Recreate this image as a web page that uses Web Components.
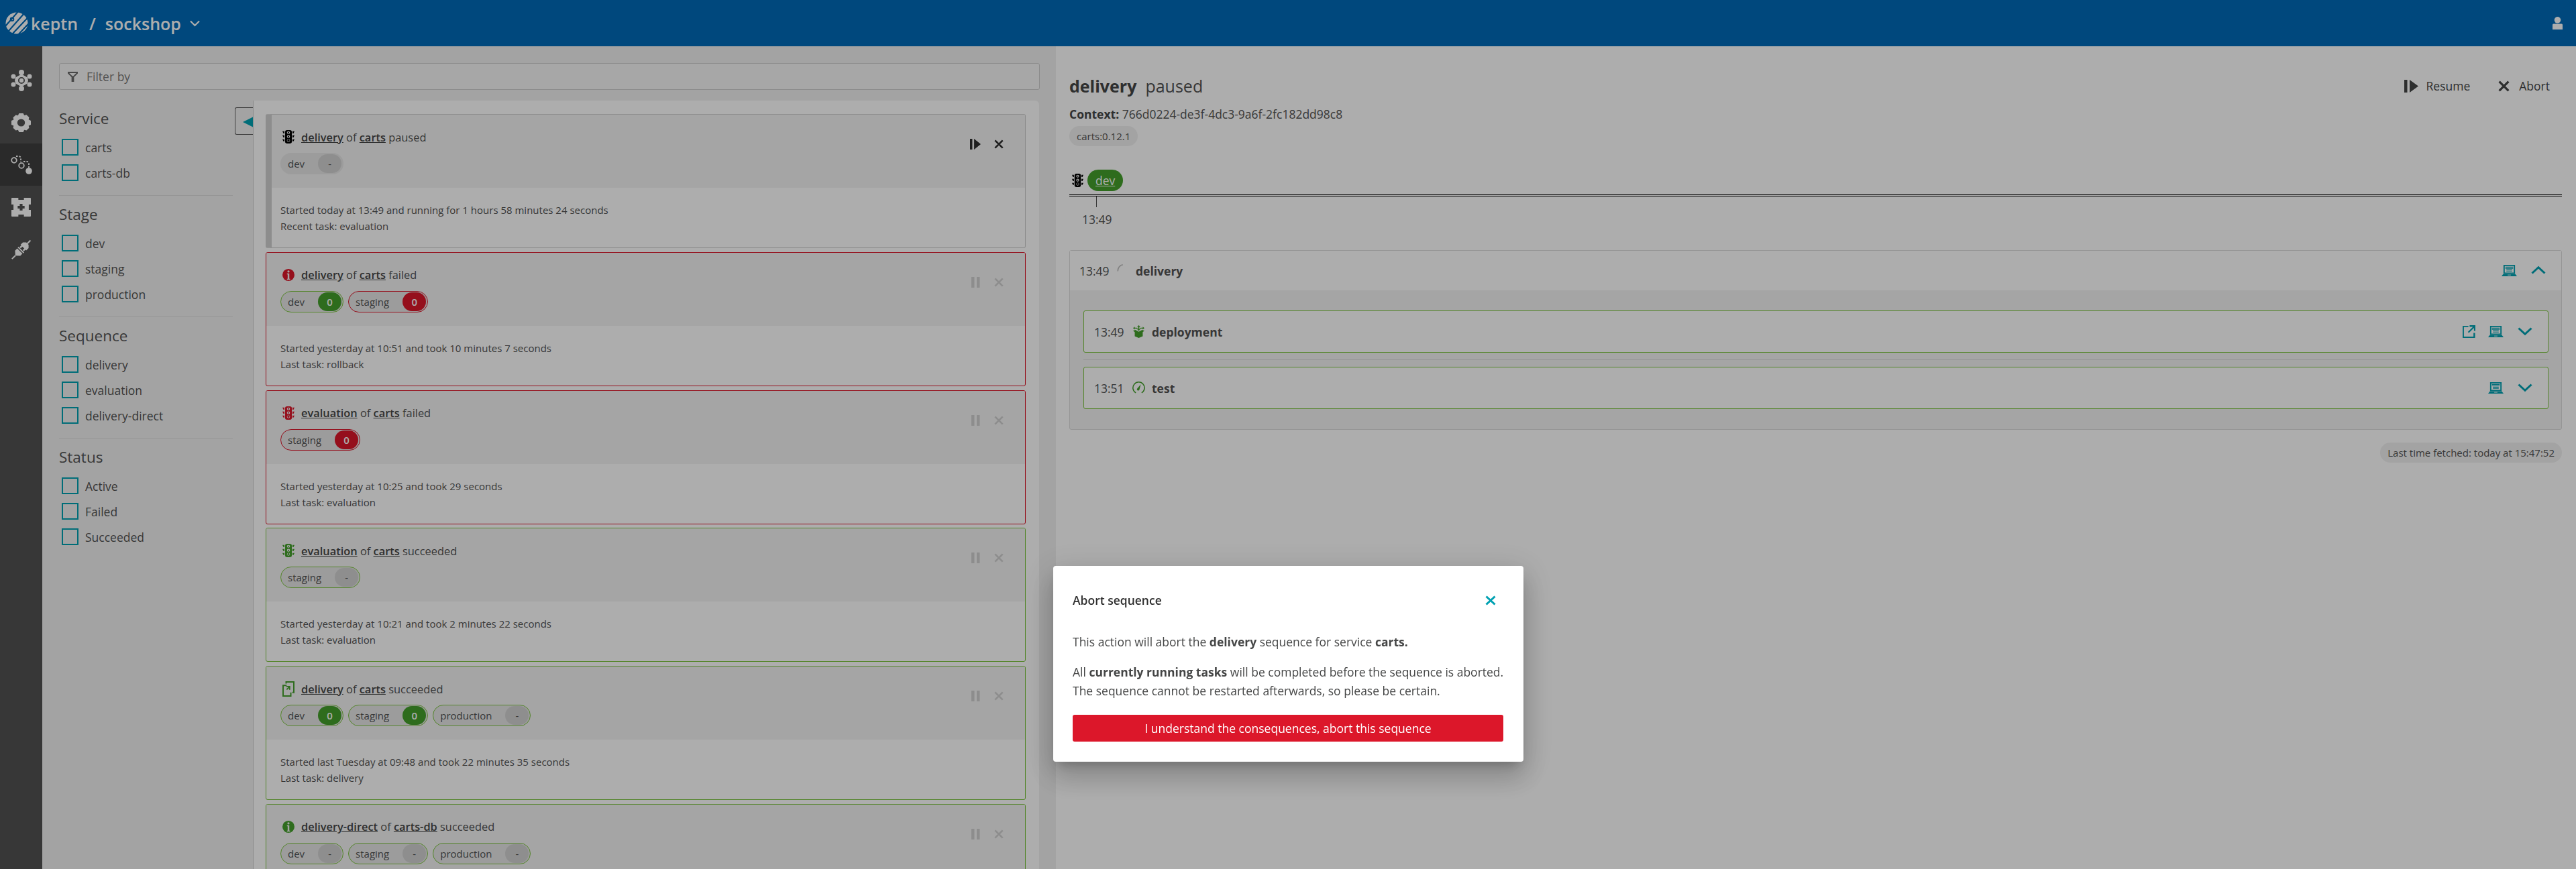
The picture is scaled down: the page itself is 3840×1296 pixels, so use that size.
<!DOCTYPE html>
<html><head><meta charset="utf-8"><title>keptn</title>
<style>
html,body{margin:0;padding:0;width:3840px;height:1296px;overflow:hidden;background:#f2f2f2;font-family:"Open Sans",sans-serif;color:#525252;font-size:17.500px}
</style></head><body>
<k-app>
  <k-header slot="header"></k-header>
  <k-sidenav slot="nav"></k-sidenav>
  <k-filterbar slot="filter"></k-filterbar>
  <k-filters slot="filters">
    <k-section title="Service"><k-check>carts</k-check><k-check>carts-db</k-check></k-section>
    <k-section title="Stage" divided><k-check>dev</k-check><k-check>staging</k-check><k-check>production</k-check></k-section>
    <k-section title="Sequence" divided><k-check>delivery</k-check><k-check>evaluation</k-check><k-check>delivery-direct</k-check></k-section>
    <k-section title="Status" divided><k-check>Active</k-check><k-check>Failed</k-check><k-check>Succeeded</k-check></k-section>
  </k-filters>
  <k-list slot="list">
    <k-card status="paused" icon="light" seq="delivery" svc="carts" state="paused">
      <k-chip slot="chips" tone="none" badge="none">dev</k-chip>
      Started today at 13:49 and running for 1 hours 58 minutes 24 seconds<br>Recent task: evaluation
    </k-card>
    <k-card status="failed" icon="info" seq="delivery" svc="carts" state="failed">
      <k-chip slot="chips" tone="ok" badge="ok">dev</k-chip>
      <k-chip slot="chips" tone="bad" badge="bad">staging</k-chip>
      Started yesterday at 10:51 and took 10 minutes 7 seconds<br>Last task: rollback
    </k-card>
    <k-card status="failed" icon="light" seq="evaluation" svc="carts" state="failed">
      <k-chip slot="chips" tone="bad" badge="bad">staging</k-chip>
      Started yesterday at 10:25 and took 29 seconds<br>Last task: evaluation
    </k-card>
    <k-card status="ok" icon="light" seq="evaluation" svc="carts" state="succeeded">
      <k-chip slot="chips" tone="ok" badge="none">staging</k-chip>
      Started yesterday at 10:21 and took 2 minutes 22 seconds<br>Last task: evaluation
    </k-card>
    <k-card status="ok" icon="extbox" seq="delivery" svc="carts" state="succeeded">
      <k-chip slot="chips" tone="ok" badge="ok">dev</k-chip>
      <k-chip slot="chips" tone="ok" badge="ok">staging</k-chip>
      <k-chip slot="chips" tone="ok" badge="none">production</k-chip>
      Started last Tuesday at 09:48 and took 22 minutes 35 seconds<br>Last task: delivery
    </k-card>
    <k-card status="ok" icon="info" seq="delivery-direct" svc="carts-db" state="succeeded">
      <k-chip slot="chips" tone="ok" badge="none">dev</k-chip>
      <k-chip slot="chips" tone="ok" badge="none">staging</k-chip>
      <k-chip slot="chips" tone="ok" badge="none">production</k-chip>
    </k-card>
  </k-list>
  <k-detail slot="detail"></k-detail>
</k-app>
<k-modal></k-modal>
<script>
const ICONS={
 light:['0 0 18 22','<path fill-rule="evenodd" d="M7 0h4a3 3 0 0 1 3 3v16a3 3 0 0 1-3 3H7a3 3 0 0 1-3-3V3a3 3 0 0 1 3-3zM9 1.800a2.300 2.300 0 1 0 0 4.600a2.300 2.300 0 0 0 0-4.600zM9 8.300a2.300 2.300 0 1 0 0 4.600a2.300 2.300 0 0 0 0-4.600zM9 14.800a2.300 2.300 0 1 0 0 4.600a2.300 2.300 0 0 0 0-4.600z"/><circle cx="9" cy="4.100" r="1.100"/><circle cx="9" cy="10.600" r="1.100"/><circle cx="9" cy="17.100" r="1.600"/><path d="M0 2h3v3.500H1.500zM0 8.500h3V12H1.500zM0 15h3v3.500H1.500zM18 2h-3v3.500h1.500zM18 8.500h-3V12h1.500zM18 15h-3v3.500h1.500z"/>'],
 info:['0 0 20 22','<path fill-rule="evenodd" d="M10 1a10 10 0 1 1 0 20a10 10 0 0 1 0-20zM10 3.500a1.800 1.800 0 1 0 0 3.600a1.800 1.800 0 0 0 0-3.600zM7.500 8.500v1.700h1.200v7H7.500V19h5.200v-1.800h-1.300V8.500z"/>'],
 extbox:['0 0 20 26','<path d="M0 6h7v2.200H2.200v15.600h10.600V19H15v7H0z"/><path d="M5 0h15v20h-3.500v-2.200h1.300V2.200H7.200V4H5z"/><path d="M6.500 10h6.500v6.500h-2v-3l-3.300 3.300-1.500-1.500L10 11.900H6.500z" transform="translate(0 -2)"/>'],
 deploy:['0 0 20 22','<path d="M10 0l3 3h-2v6.500h-2V3H7zM0 5l3-2.400v1.700h3.500L9 7v1.500L6 5.700H3v1.700zM20 5l-3-2.400v1.700h-3.500L11 7v1.500l3-2.800h3v1.700z"/><path d="M0 9.500L4 8l6 3.300L16 8l4 1.500-3 2.500v7l-7 3-7-3v-7z"/>'],
 gauge:['0 0 22 22','<path fill="none" stroke="currentColor" stroke-width="1.800" d="M6 19.600A10 10 0 1 1 16 19.600"/><path d="M14.500 5l-2.300 8.800a2.200 2.200 0 1 1-3.600-2z"/>'],
 ext:['0 0 20 20','<path d="M0 1h9v2H2v15h15v-6h2.500v8H0z" /><path d="M11 0h9v9h-2.200V4.200l-8 8-1.600-1.600 8-8H11z"/>'],
 laptop:['0 0 24 18','<path fill-rule="evenodd" d="M3 0h18v14H3zM5 1.800v10.400h14V1.800z"/><path d="M2.800 14.300h18.400L24 18H0z"/><path d="M6 3h12v1.200H6zM6 5h12v1.200H6zM7.500 7.200h9v1.200h-9zM7.500 9.200h9v1.200h-9z"/><rect x="9.500" y="15.500" width="5" height="1" fill="#f7f7f7"/>'],
 up:['0 0 22 14','<path fill="none" stroke="currentColor" stroke-width="3" d="M1.500 12.500L11 3l9.500 9.500"/>'],
 down:['0 0 22 14','<path fill="none" stroke="currentColor" stroke-width="3" d="M1.500 1.500L11 11l9.500-9.500"/>'],
 resume:['0 0 21 19','<path d="M0 0h4.500v19H0zM8 0l13 9.500L8 19z"/>'],
 pause:['0 0 13 16','<path d="M0 0h4.500v16H0zM8 0h4.500v16H8z"/>'],
 x:['0 0 16 16','<path fill="none" stroke="currentColor" stroke-width="3" d="M1.500 1.500l13 13M14.500 1.500l-13 13"/>'],
 filter:['0 0 16 15','<path d="M0 0h16v2.500L10 8v7H6V8L0 2.500zM2.500 2l4.800 4.500h1.400L13.500 2z" fill-rule="evenodd"/>'],
 user:['0 0 15 19','<circle cx="7.500" cy="4.800" r="4.800"/><path d="M1.500 10.500h12a1.500 1.500 0 0 1 1.500 1.500v7H0v-7a1.500 1.500 0 0 1 1.500-1.500z"/>'],
 chev:['0 0 15 10','<path fill="none" stroke="currentColor" stroke-width="2.200" d="M1 1.500l6.500 6.500 6.500-6.500"/>'],
 spin:['0 0 12 12','<path fill="none" stroke="currentColor" stroke-width="2" d="M1.500 11.500A10 10 0 0 1 10.500 1"/>'],
 flower:['0 0 32 32','<circle cx="16" cy="4" r="4"/><circle cx="16" cy="28" r="4"/><circle cx="4" cy="10" r="3.500"/><circle cx="28" cy="10" r="3.500"/><circle cx="4" cy="22" r="3.500"/><circle cx="28" cy="22" r="3.500"/><path fill-rule="evenodd" d="M16 6.500l8 4.500 1 1 1 4-1 4-1 1-8 4.500-8-4.500-1-1-1-4 1-4 1-1zM16 11a5 5 0 1 0 0 10a5 5 0 0 0 0-10z"/><circle cx="16" cy="16" r="3.200"/>'],
 gear:['0 0 28 28','<path fill-rule="evenodd" d="M11 0h6l1.500 3 3.200-.7 3.800 3.800-.7 3.200L28 11v6l-3.200 1.500.7 3.200-3.800 3.800-3.200-.7L17 28h-6l-1.500-3.200-3.200.7-3.800-3.800.7-3.200L0 17v-6l3.200-1.500-.7-3.200 3.800-3.800 3.200.7zM14 8.500a5.500 5.500 0 1 0 0 11a5.500 5.500 0 0 0 0-11z"/>'],
 seq:['0 0 32 28','<g fill="none" stroke="currentColor" stroke-width="1.800"><circle cx="5" cy="7" r="3.800"/><circle cx="16" cy="15" r="3.800"/><path stroke-dasharray="2.500 2" d="M8 1h4a3 3 0 0 1 3 3v6M19 9h5a3 3 0 0 1 3 3v8"/></g><circle cx="27" cy="23" r="4.800"/>'],
 puzzle:['0 0 28 28','<path fill-rule="evenodd" d="M1 0h9v3h8V0h9a1 1 0 0 1 1 1v9h-3v8h3v9a1 1 0 0 1-1 1h-9v-3h-8v3H1a1 1 0 0 1-1-1v-9h3v-8H0V1a1 1 0 0 1 1-1zM12 9v3H9v4h3v3h4v-3h3v-4h-3V9z"/>'],
 plug:['0 0 32 32','<g transform="rotate(-45 16 16)"><path d="M-4 15h7v2h-7zM3 16L8 10.500h4.500v11H8zM14 10h1.800v12H14zM20 10h5l3.500 3.500v5L25 22h-5zM16.500 11.500h3.500v2.500h-3.500zM16.500 18h3.500v2.500h-3.500zM28 15h7v2h-7z"/></g>'],
 logo:['0 0 34 34','<circle cx="17" cy="17" r="16.500" fill="#fff"/><g stroke="#006bb8" stroke-width="2.200"><path d="M-2 24L20-2M4 30L28 2M10 34L34 8M18 36L38 14"/></g><path d="M2 10L8 3l6 0L4 15z" fill="#fff"/><circle cx="10" cy="11" r="2.400" fill="none" stroke="#006bb8" stroke-width="1.800"/>']
};
function def(name,css,html){
  customElements.define(name,class extends HTMLElement{
    connectedCallback(){
      if(this.shadowRoot)return;
      const r=this.attachShadow({mode:'open'});
      const h=typeof html==='function'?html(this):html;
      r.innerHTML='<style>'+css+'</style>'+h;
    }
  });
}
def('k-icon',':host{display:inline-flex;flex:none;line-height:0}svg{display:block;width:100%;height:100%;fill:currentColor}',
  el=>{const i=ICONS[el.getAttribute('name')];return '<svg xmlns="http://www.w3.org/2000/svg" viewBox="'+i[0]+'" preserveAspectRatio="none">'+i[1]+'</svg>';});
def('k-app',`
 :host{display:grid;grid-template-columns:63px 1511px 1fr;grid-template-rows:69px 1227px;width:3840px;height:1296px}
 .h{grid-column:1/4}
 .l{background:#f1f1f1;display:flex;flex-direction:column;padding:25px 24px 0 25px;box-sizing:border-box;overflow:hidden;width:1511px}
 .row{display:flex;margin-top:16px;flex:1;min-height:0}
 .d{min-width:0;background:#fff;overflow:hidden}
`,`<div class="h"><slot name="header"></slot></div><slot name="nav"></slot>
 <div class="l"><slot name="filter"></slot><div class="row"><slot name="filters"></slot><slot name="list"></slot></div></div>
 <div class="d"><slot name="detail"></slot></div>`);
def('k-header',`
 :host{display:flex;align-items:center;height:69px;background:#006bb8;color:#fff;padding:0 20px 0 8px;box-sizing:border-box}
 .logo{width:34px;height:33px;margin-right:4px}
 .b{font-size:25px;font-weight:600;line-height:32px}
 .s{margin:0 14px 0 17px;font-size:25px;font-weight:600}
 .c{width:15px;height:10px;margin-left:13px;}
 .sp{flex:1}.u{width:15px;height:19px}
`,`<k-icon class="logo" name="logo"></k-icon><span class="b">keptn</span><span class="s">/</span><span class="b">sockshop</span><k-icon class="c" name="chev"></k-icon><span class="sp"></span><k-icon class="u" name="user"></k-icon>`);
def('k-sidenav',`
 :host{display:flex;flex-direction:column;background:#525252;padding-top:19px;color:#fff;width:63px}
 div{height:63px;display:flex;align-items:center;justify-content:center}
 .a{background:#3e3e3e}
`,`<div><k-icon name="flower" style="width:32px;height:32px"></k-icon></div>
 <div><k-icon name="gear" style="width:29px;height:28px"></k-icon></div>
 <div class="a"><k-icon name="seq" style="width:32px;height:28px"></k-icon></div>
 <div><k-icon name="puzzle" style="width:29px;height:28px"></k-icon></div>
 <div><k-icon name="plug" style="width:32px;height:32px"></k-icon></div>`);
def('k-filterbar',`
 :host{display:flex;align-items:center;height:40px;box-sizing:border-box;width:1462px;border:1px solid #cfcfcf;border-radius:3px;background:#f7f7f7;padding-left:12px;color:#7a7a7a;font-size:17.500px}
 k-icon{width:15px;height:15px;margin-right:13px;color:#6a6a6a}
`,`<k-icon name="filter"></k-icon><span>Filter by</span>`);
def('k-filters',`
 :host{display:block;width:289px;flex:none;position:relative;padding-top:13px;box-sizing:border-box}
 .t{position:absolute;left:262px;top:10px;width:27px;height:41px;box-sizing:border-box;border:1px solid #5a5a5a;border-right:0;border-radius:3px 0 0 3px;overflow:hidden}
 .t i{position:absolute;left:11px;top:13px;border-style:solid;border-width:8px 16px 8px 0;border-color:transparent #00a1b2 transparent transparent}
`,`<slot></slot><div class="t"><i></i></div>`);
def('k-section',`
 :host{display:block;width:259px;padding-bottom:21px}
 :host([divided]){border-top:1px solid #dcdcdc;padding-top:14px}
 h3{margin:0 0 16px;font-size:22.500px;line-height:28px;font-weight:400;color:#525252}
 .c{display:flex;flex-direction:column;gap:13px;padding-left:4px}
`,el=>`<h3>${el.getAttribute('title')}</h3><div class="c"><slot></slot></div>`);
def('k-check',`
 :host{display:flex;align-items:center;height:25px;font-size:17.500px;color:#525252}
 i{display:block;width:25px;height:25px;box-sizing:border-box;border:2px solid #00a1b2;margin-right:10px}
`,`<i></i><slot></slot>`);
def('k-list',`
 :host{display:flex;flex-direction:column;gap:5.800px;width:1172px;flex:none;box-sizing:border-box;background:#fff;border-left:1px solid #cfcfcf;padding:20px 20px 0 18px;border-radius:0 6px 0 0;height:1200px;overflow:hidden}
`,`<slot></slot>`);
def('k-card',`
 :host{display:block;height:200px;flex:none;box-sizing:border-box;border:1px solid #cfcfcf;border-radius:3px;overflow:hidden;color:#525252;font-size:15px}
 :host([status=paused]){border-left:9px solid #d0d0d0}
 :host([status=failed]){border-color:#dc172a}
 :host([status=ok]){border-color:#7dc540}
 .head{height:109px;background:#f3f3f3;box-sizing:border-box;padding:21px 32px 0 21px;display:flex}
 :host([status=paused]) .head{padding-left:13px}
 .l{flex:1}
 .title{display:flex;align-items:center;height:24px;font-size:16.400px;padding-left:3px}
 .title k-icon{width:18px;height:20px;margin-right:10px}
 .title k-icon[name=extbox]{height:23px}
 :host([status=failed]) .title k-icon{color:#dc172a}
 :host([status=ok]) .title k-icon{color:#44a02c}
 :host([status=paused]) .title k-icon{color:#000}
 b{font-weight:600;color:#454646;text-decoration:underline}
 .chips{display:flex;gap:7px;margin-top:12px}
 .acts{display:flex;align-items:center;gap:20px;height:16px;margin-top:15px;color:#d0d0d0}
 :host([status=paused]) .acts{color:#2f2f2f}
 .acts k-icon{width:16px;height:16px}
 .acts .p{width:13px;margin:0 1px 0 2px}
 .acts .xx{width:14px;height:14px}
 .body{padding:21px 21px 0;line-height:24px}
 :host([status=paused]) .body{padding-left:13px}
`,el=>{const a=n=>el.getAttribute(n);const p=a('status')==='paused';
 return `<div class="head"><div class="l"><div class="title"><k-icon name="${a('icon')}"></k-icon><span><b>${a('seq')}</b> of <b>${a('svc')}</b> ${a('state')}</span></div><div class="chips"><slot name="chips"></slot></div></div>
 <div class="acts"><k-icon class="${p?'':'p'}" name="${p?'resume':'pause'}"></k-icon><k-icon class="xx" name="x"></k-icon></div></div><div class="body"><slot></slot></div>`;});
def('k-chip',`
 :host{display:inline-flex;align-items:center;height:32px;box-sizing:border-box;border:1px solid transparent;border-radius:16px;background:#e6e6e6;padding:0 2px 0 10px;font-size:15px;color:#525252}
 :host([tone=ok]){border-color:#7dc540}
 :host([tone=bad]){border-color:#dc172a}
 .t{margin-right:20px}
 .b{width:35px;height:28px;border-radius:14px;display:flex;align-items:center;justify-content:center;background:#d2d2d2;font-weight:400}
 :host([badge=ok]) .b{background:#44a02c;color:#fff;font-weight:600}
 :host([badge=bad]) .b{background:#dc172a;color:#fff;font-weight:600}
`,el=>{const b=el.getAttribute('badge');return `<span class="t"><slot></slot></span><span class="b">${b==='none'?'-':'0'}</span>`;});
def('k-task',`
 :host{display:flex;align-items:center;height:63px;box-sizing:border-box;border:1px solid #7dc540;border-radius:3px;padding:0 23px 0 15px;background:#fff;color:#525252;font-size:17.500px}
 .ts{width:58px}
 .ic{width:17px;height:19px;color:#44a02c;margin-right:11px}
 :host([gauge]) .ic{width:19px;height:19px;margin-left:-1px;margin-right:10px}
 b{font-weight:700;color:#525252}
 .sp{flex:1}
 .a{color:#00a1b2}
 .e{width:19px;height:19px;margin-right:19px}.lp{width:23px;height:17px;margin-right:21px}.ch{width:22px;height:13px}
`,el=>{const g=el.hasAttribute('gauge');return `<span class="ts">${el.getAttribute('time')}</span><k-icon class="ic" name="${g?'gauge':'deploy'}"></k-icon><b>${el.getAttribute('name')}</b><span class="sp"></span>${g?'':'<k-icon class="a e" name="ext"></k-icon>'}<k-icon class="a lp" name="laptop"></k-icon><k-icon class="a ch" name="down"></k-icon>`;});
def('k-detail',`
 :host{display:block;padding:43px 21px 0 20px;color:#525252;font-size:17.500px}
 .top{display:flex;align-items:center;height:32px}
 .top h1{margin:0;font-size:25px;font-weight:700;color:#454646;line-height:32px}
 .top .st{font-size:25px;margin-left:13px;font-weight:400}
 .sp{flex:1}
 .btn{display:flex;align-items:center;color:#454646}
 .btn k-icon{margin-right:12px}
 .ctx{margin-top:14px;line-height:24px}.ctx b{font-weight:700;color:#454646}
 .ver{display:inline-flex;align-items:center;height:30px;border-radius:15px;background:#f0f0f0;padding:0 11px;font-size:15px;margin-top:6px;vertical-align:top}
 .tl{display:flex;align-items:center;margin-top:35px;padding-left:4px;height:32px}
 .tl k-icon{width:17px;height:20px;color:#000;margin-right:6px}
 .pill{display:flex;align-items:center;height:32px;padding:0 12px;border-radius:16px;background:#44a02c;color:#fff;text-decoration:underline}
 .line{height:3px;box-sizing:border-box;border-top:1px solid #000;border-bottom:1px solid #000;margin-top:5px}
 .tick{width:1px;height:16px;background:#525252;margin-left:40px}
 .tt{margin:6px 0 0 19px;width:44px;text-align:center;line-height:24px;white-space:nowrap}
 .seq{margin-top:34px;border:1px solid #dcdcdc;border-radius:3px;background:#f3f3f3}
 .sh{height:59px;background:#fff;display:flex;align-items:center;padding:0 23px 0 14px}
 .sh .ts{width:56px}
 .sh .spn{width:10px;height:11px;color:#c0c0c0;margin-right:18px;margin-top:-8px}
 .sh b{font-weight:700;color:#525252}
 .sh .lp{width:23px;height:17px;margin-right:21px;color:#00a1b2}.sh .ch{width:22px;height:13px;color:#00a1b2;margin-top:-2px}
 .sb{padding:30px 19px 30px 20px}
 .hr{height:1px;background:#dcdcdc;margin:10px 0}
 .last{display:flex;justify-content:flex-end;margin-top:19px}
 .last span{display:block;height:30px;line-height:30px;border-radius:15px;background:#f0f0f0;padding:0 11px;font-size:15px}
`,`<div class="top"><h1>delivery</h1><span class="st">paused</span><span class="sp"></span>
 <span class="btn"><k-icon name="resume" style="width:21px;height:19px"></k-icon>Resume</span>
 <span class="btn" style="margin:0 18px 0 42px"><k-icon name="x" style="width:17px;height:17px;margin-right:14px"></k-icon>Abort</span></div>
 <div class="ctx"><b>Context:</b> 766d0224-de3f-4dc3-9a6f-2fc182dd98c8</div>
 <div><span class="ver">carts:0.12.1</span></div>
 <div class="tl"><k-icon name="light"></k-icon><span class="pill">dev</span></div>
 <div class="line"></div><div class="tick"></div><div class="tt">13:49</div>
 <div class="seq"><div class="sh"><span class="ts">13:49</span><k-icon class="spn" name="spin"></k-icon><b>delivery</b><span class="sp"></span><k-icon class="lp" name="laptop"></k-icon><k-icon class="ch" name="up"></k-icon></div>
 <div class="sb"><k-task time="13:49" name="deployment"></k-task><div class="hr"></div><k-task time="13:51" name="test" gauge></k-task></div></div>
 <div class="last"><span>Last time fetched: today at 15:47:52</span></div>`);
def('k-modal',`
 :host{position:fixed;inset:0;background:rgba(0,0,0,.32);display:block}
 .d{position:absolute;left:1570px;top:844px;width:701px;height:292px;box-sizing:border-box;background:#fff;border-radius:4px;padding:39px 30px 30px 29px;box-shadow:0 11px 15px -7px rgba(0,0,0,.2),0 24px 38px 3px rgba(0,0,0,.14),0 9px 46px 8px rgba(0,0,0,.12);color:#454646;font-size:17.500px;line-height:28px}
 .h{display:flex;justify-content:space-between;align-items:center;height:24px;font-weight:600;color:#2f2f2f}
 .h k-icon{width:16px;height:15px;color:#00a1b2;margin-right:11px}
 p{margin:36px 0 17px;white-space:nowrap}p+p{margin:0 0 22px}
 b{font-weight:700}
 button{display:block;width:100%;height:40px;border:0;border-radius:3px;background:#dc172a;color:#fff;font:400 17.500px "Open Sans",sans-serif;padding:0}
`,`<div class="d"><div class="h"><span>Abort sequence</span><k-icon name="x"></k-icon></div>
 <p>This action will abort the <b>delivery</b> sequence for service <b>carts.</b></p>
 <p>All <b>currently running tasks</b> will be completed before the sequence is aborted.<br>The sequence cannot be restarted afterwards, so please be certain.</p>
 <button>I understand the consequences, abort this sequence</button></div>`);
</script>
</body></html>
